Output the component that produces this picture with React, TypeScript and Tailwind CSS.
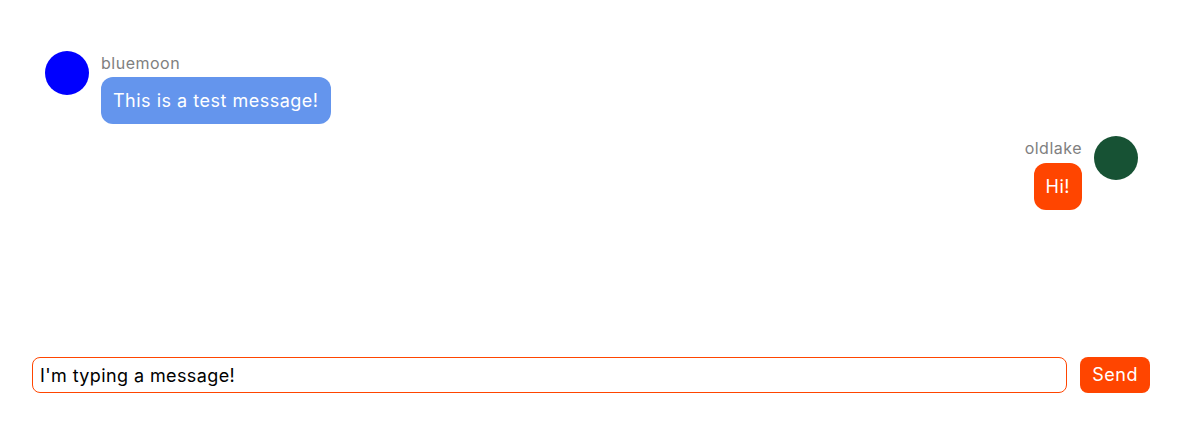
import React from "react";

export default function App() {
  return (
    <div
      className="h-[426px] w-[1200px] bg-white flex flex-col pl-[32px] pr-[50px] pb-[33px] pt-[51px] tracking-[0.5px]"
      style={{ fontFamily: "Inter, 'Noto Sans', sans-serif" }}
    >
      <div className="flex-1 flex flex-col gap-3 pl-[13px] pr-[12px]">
        <div className="flex items-start gap-3">
          <div className="w-11 h-11 rounded-full bg-[#0000ff] shrink-0" />
          <div className="flex flex-col items-start">
            <div className="text-base leading-6 text-[#808080] mb-0.5">bluemoon</div>
            <div className="bg-[#6495ed] text-white text-lg leading-[27px] px-3 py-2.5 rounded-xl">
              This is a test message!
            </div>
          </div>
        </div>
        <div className="flex items-start gap-3 flex-row-reverse">
          <div className="w-11 h-11 rounded-full bg-[#175234] shrink-0" />
          <div className="flex flex-col items-end">
            <div className="text-base leading-6 text-[#808080] mb-[3px]">oldlake</div>
            <div className="bg-[#ff4500] text-white text-lg leading-[27px] px-3 py-2.5 rounded-xl">
              Hi!
            </div>
          </div>
        </div>
      </div>
      <div className="flex items-center gap-[13px]">
        <input
          className="flex-1 h-9 border border-[#ff4500] rounded-lg px-[7px] text-lg text-black outline-none tracking-[0.4px]"
          defaultValue="I'm typing a message!"
          style={{ fontFamily: "Inter, 'Noto Sans', sans-serif" }}
        />
        <button className="h-9 px-3 rounded-lg bg-[#ff4500] text-white text-lg tracking-[0.5px]">Send</button>
      </div>
    </div>
  );
}
